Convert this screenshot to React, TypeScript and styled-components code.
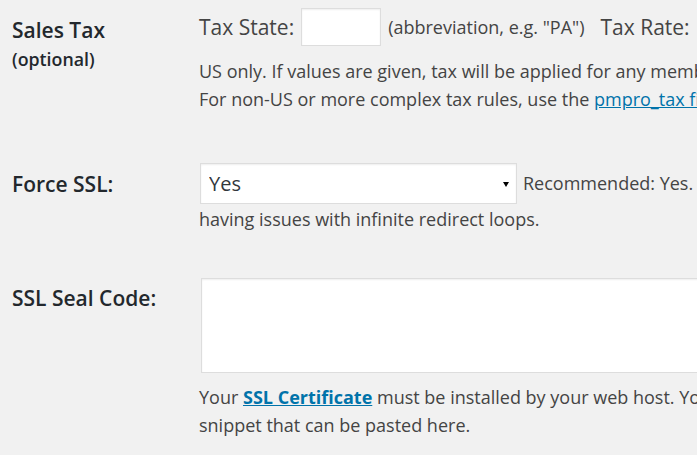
import styled, { createGlobalStyle } from "styled-components";

const GlobalStyle = createGlobalStyle`
  html, body {
    margin: 0;
    padding: 0;
    background: #f1f1f1;
    overflow: hidden;
  }
  body {
    font-family: "Open Sans", "Noto Sans", sans-serif;
    color: #444;
  }
`;

const Page = styled.div`
  width: 1300px;
  padding-left: 12px;
`;

const Row = styled.div<{ $top: number; $bottom: number }>`
  display: grid;
  grid-template-columns: 187px 1fr;
  padding-top: ${(p) => p.$top}px;
  padding-bottom: ${(p) => p.$bottom}px;
`;

const Label = styled.div<{ $offset: number }>`
  padding-top: ${(p) => p.$offset}px;
  font-size: 21px;
  font-weight: 600;
  line-height: 28px;
  color: #23282d;
`;

const SubLabel = styled.div`
  margin-top: 3px;
  font-size: 17.8px;
  line-height: 24px;
`;

const FieldLine = styled.div`
  display: flex;
  align-items: center;
  gap: 7px;
  white-space: nowrap;
`;

const FieldText = styled.span<{ $size: number }>`
  font-size: ${(p) => p.$size}px;
  color: #444;
`;

const Spacer = styled.span`
  width: 2px;
`;

const TextInput = styled.input`
  box-sizing: border-box;
  width: 80px;
  height: 38px;
  margin: 0;
  border: 1px solid #ddd;
  background: #fff;
  box-shadow: inset 0 1px 2px rgba(0, 0, 0, 0.07);
  font-family: inherit;
  font-size: 16px;
  outline: none;
`;

const Description = styled.p<{ $top: number }>`
  margin: ${(p) => p.$top}px 0 0;
  font-size: 18px;
  line-height: 28px;
  color: #444;
`;

const Link = styled.a`
  color: #0073aa;
  text-decoration: underline;
`;

const SelectWrap = styled.span`
  position: relative;
  display: inline-block;
  vertical-align: middle;
  margin-left: 1px;
  &::after {
    content: "";
    position: absolute;
    right: 8px;
    top: 19px;
    border-left: 3px solid transparent;
    border-right: 3px solid transparent;
    border-top: 5px solid #000;
    pointer-events: none;
  }
`;

const Select = styled.select`
  box-sizing: border-box;
  width: 317px;
  height: 41px;
  padding: 0 8px;
  border: 1px solid #ddd;
  background: #fff;
  box-shadow: inset 0 1px 2px rgba(0, 0, 0, 0.07);
  appearance: none;
  font-family: "Open Sans", "Noto Sans", sans-serif;
  font-size: 20px;
  color: #32373c;
  outline: none;
`;

const NoteBlock = styled.div`
  font-size: 18px;
  line-height: 31px;
`;

const InlineNote = styled.span`
  margin-left: 6px;
  vertical-align: middle;
`;

const TextArea = styled.textarea`
  display: block;
  box-sizing: border-box;
  width: 700px;
  height: 95px;
  margin: 0 0 0 2px;
  border: 1px solid #ddd;
  background: #fff;
  box-shadow: inset 0 1px 2px rgba(0, 0, 0, 0.07);
  resize: none;
  outline: none;
`;

export default function App() {
  return (
    <>
      <GlobalStyle />
      <Page>
        <Row $top={8} $bottom={50}>
          <Label $offset={8}>
            Sales Tax
            <SubLabel>(optional)</SubLabel>
          </Label>
          <div>
            <FieldLine>
              <FieldText $size={21}>Tax State:</FieldText>
              <TextInput />
              <FieldText $size={18}>(abbreviation, e.g. "PA")</FieldText>
              <Spacer />
              <FieldText $size={21}>Tax Rate:</FieldText>
              <TextInput />
              <FieldText $size={18}>(decimal, e.g. "0.06")</FieldText>
            </FieldLine>
            <Description $top={11}>
              US only. If values are given, tax will be applied for any members ordering from the
              selected state.
              <br />
              For non-US or more complex tax rules, use the <Link href="#">pmpro_tax filter</Link>.
            </Description>
          </div>
        </Row>
        <Row $top={0} $bottom={43}>
          <Label $offset={7}>Force SSL:</Label>
          <NoteBlock>
            <SelectWrap>
              <Select defaultValue="1">
                <option value="0">No</option>
                <option value="1">Yes</option>
              </Select>
            </SelectWrap>
            <InlineNote>Recommended: Yes. Try No if you are</InlineNote>
            <br />
            having issues with infinite redirect loops.
          </NoteBlock>
        </Row>
        <Row $top={0} $bottom={20}>
          <Label $offset={6}>SSL Seal Code:</Label>
          <div>
            <TextArea />
            <Description $top={10}>
              Your{" "}
              <Link href="#">
                <strong>SSL Certificate</strong>
              </Link>{" "}
              must be installed by your web host. Your SSL Seal will be a short HTML or JavaScript
              <br />
              snippet that can be pasted here.
            </Description>
          </div>
        </Row>
      </Page>
    </>
  );
}
